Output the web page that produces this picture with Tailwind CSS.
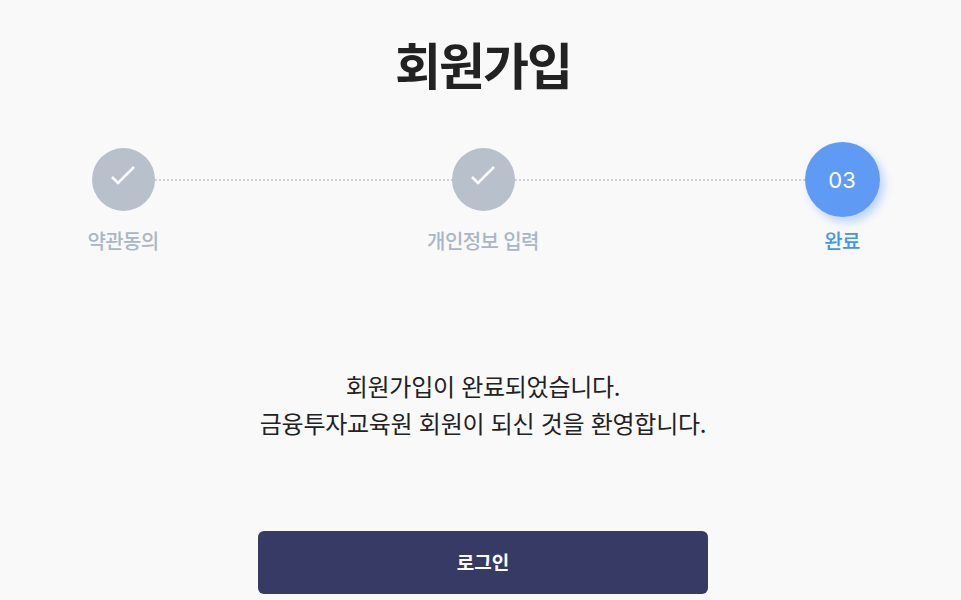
<!DOCTYPE html>
<html lang="ko">
<head>
<meta charset="UTF-8" />
<title>회원가입</title>
<script src="https://cdn.jsdelivr.net/npm/@tailwindcss/browser@4"></script>
</head>
<body class="bg-[#f9f9fa] h-[600px] overflow-hidden pl-[5px] font-['Noto_Sans_CJK_KR',sans-serif] text-[#222]">
  <h1 class="pt-[27px] text-center text-[50px] leading-[72px] font-bold tracking-[-2px]">회원가입</h1>

  <!-- Steps -->
  <div class="relative mt-[43px] ml-[58px] w-[839px] h-[120px]">
    <div class="absolute left-[92px] right-[97px] top-[37px] border-t-2 border-dotted border-[#cfcfd4]"></div>
    <div class="relative flex justify-between">
      <div class="flex w-[120px] flex-col items-center">
        <div class="flex h-[75px] items-center">
          <div class="flex h-[63px] w-[63px] items-center justify-center rounded-full bg-[#b8c0cc]">
            <svg class="mb-[10px]" width="26" height="22" viewBox="0 0 26 22" fill="none" stroke="#fff" stroke-width="2.5"><path d="M2 13l6 6L24 3"/></svg>
          </div>
        </div>
        <span class="mt-[8px] text-[20px] leading-[32px] font-medium tracking-[-0.6px] text-[#a9b6c6]">약관동의</span>
      </div>
      <div class="ml-[1px] flex w-[120px] flex-col items-center">
        <div class="flex h-[75px] items-center">
          <div class="flex h-[63px] w-[63px] items-center justify-center rounded-full bg-[#b8c0cc]">
            <svg class="mb-[10px]" width="26" height="22" viewBox="0 0 26 22" fill="none" stroke="#fff" stroke-width="2.5"><path d="M2 13l6 6L24 3"/></svg>
          </div>
        </div>
        <span class="mt-[8px] text-[20px] leading-[32px] font-medium tracking-[-0.6px] text-[#a9b6c6] whitespace-nowrap">개인정보 입력</span>
      </div>
      <div class="flex w-[120px] flex-col items-center">
        <div class="flex h-[75px] w-[75px] items-center justify-center rounded-full bg-[#5f9bf5] pt-[1px] shadow-[4px_5px_8px_rgba(95,155,245,0.4)] font-['Inter',sans-serif] text-[22px] text-white">03</div>
        <span class="mt-[8px] text-[20px] leading-[32px] font-medium tracking-[-0.6px] text-[#3f96ee]">완료</span>
      </div>
    </div>
  </div>

  <!-- Message -->
  <div class="mt-[105px] text-center text-[24px] leading-[37px] tracking-[-0.28px] text-[#222]">
    <p>회원가입이 완료되었습니다.</p>
    <p>금융투자교육원 회원이 되신 것을 환영합니다.</p>
  </div>

  <button class="mx-auto mt-[90px] block h-[63px] w-[450px] rounded-[6px] bg-[#383a66] text-[19px] font-bold text-white">로그인</button>
</body>
</html>
